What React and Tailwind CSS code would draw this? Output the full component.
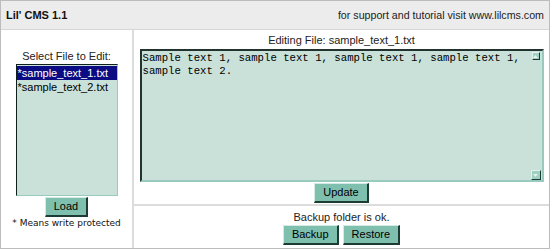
const files = ['*sample_text_1.txt', '*sample_text_2.txt']

const sans = { fontFamily: '"Liberation Sans", Arial, sans-serif' }

function Btn({ children }) {
    return (
        <button className="h-[20px] px-[8px] bg-[#7ebfae] border border-t-[#d2ece5] border-l-[#d2ece5] border-b-2 border-r-2 border-b-[#1d3b35] border-r-[#1d3b35] text-[11px] leading-none text-black font-['Liberation_Sans',Arial,sans-serif]">
            {children}
        </button>
    )
}

function ScrollArrow({ down }) {
    return (
        <div className={`${down ? 'w-[10px] h-[10px]' : 'w-[8px] h-[8px]'} bg-[#9fd0c2] border border-t-[#e2f2ee] border-l-[#e2f2ee] border-b-[#1d3b35] border-r-[#1d3b35] flex items-center justify-center`}>
            <svg width="5" height="3" viewBox="0 0 6 4">
                {down ? <path d="M0 0h6L3 4z" fill="#e8f5f1" /> : <path d="M0 4h6L3 0z" fill="#e8f5f1" />}
            </svg>
        </div>
    )
}

export default function App() {
    return (
        <div className="w-[550px] h-[249px] bg-white border border-[#bcbcbc] flex flex-col font-['Liberation_Sans',Arial,sans-serif] text-[11px] text-[#111]" style={sans}>
            {/* header */}
            <div className="h-[29px] bg-[#ececec] border-b border-[#d6d6d6] flex items-center justify-between pl-[5px] pr-[5px] shrink-0">
                <span className="font-bold text-[11px] text-[#111]">Lil' CMS 1.1</span>
                <span className="text-[10.67px] text-[#222]">for support and tutorial visit www.lilcms.com</span>
            </div>

            <div className="flex flex-1 min-h-0">
                {/* file list */}
                <div className="w-[133px] border-r-2 border-[#dcdcdc] flex flex-col items-center pt-[20px] shrink-0">
                    <div className="leading-[13px] mb-[1px] text-[#222]">Select File to Edit:</div>
                    <div className="w-[102px] h-[132px] bg-[#c9e1d9] border border-t-[#0f1f1c] border-l-[#0f1f1c] border-b-[#98cbbd] border-r-[#98cbbd] pt-[1px]">
                        {files.map((f, i) => (
                            <div key={f} className={`h-[14px] leading-[14px] pl-[1px] ${i === 0 ? 'bg-[#0b0b84] text-white' : 'text-black'}`}>{f}</div>
                        ))}
                    </div>
                    <div className="mt-[1px]">
                        <Btn>Load</Btn>
                    </div>
                    <div className="text-[9px] leading-[12px] text-[#111] font-['DejaVu_Sans',Verdana,sans-serif]">* Means write protected</div>
                </div>

                {/* editor */}
                <div className="flex-1 flex flex-col">
                    <div className="h-[176px] border-b-2 border-[#dcdcdc] flex flex-col items-center pt-[3px]">
                        <div className="leading-[14px] mb-[2px] text-[#222]">Editing File: sample_text_1.txt</div>
                        <div className="w-[404px] h-[133px] bg-[#c9e1d9] border-2 border-t-[#22332f] border-l-[#22332f] border-b-[#98cbbd] border-r-[#98cbbd] flex">
                            <div className="flex-1 pl-[1px] pt-[1px] font-['Liberation_Mono','Courier_New',monospace] text-[10.67px] leading-[13px] text-black whitespace-pre">
                                {'Sample text 1, sample text 1, sample text 1, sample text 1,\nsample text 2.'}
                            </div>
                            <div className="w-[12px] flex flex-col justify-between items-center pt-[1px] pb-[0px]">
                                <ScrollArrow />
                                <ScrollArrow down />
                            </div>
                        </div>
                        <div className="mt-[1px]">
                            <Btn>Update</Btn>
                        </div>
                    </div>
                    <div className="flex-1 flex flex-col items-center justify-center">
                        <div className="leading-[14px] mb-[1px] text-[#222]">Backup folder is ok.</div>
                        <div className="flex gap-[4px]">
                            <Btn>Backup</Btn>
                            <Btn>Restore</Btn>
                        </div>
                    </div>
                </div>
            </div>
        </div>
    )
}
